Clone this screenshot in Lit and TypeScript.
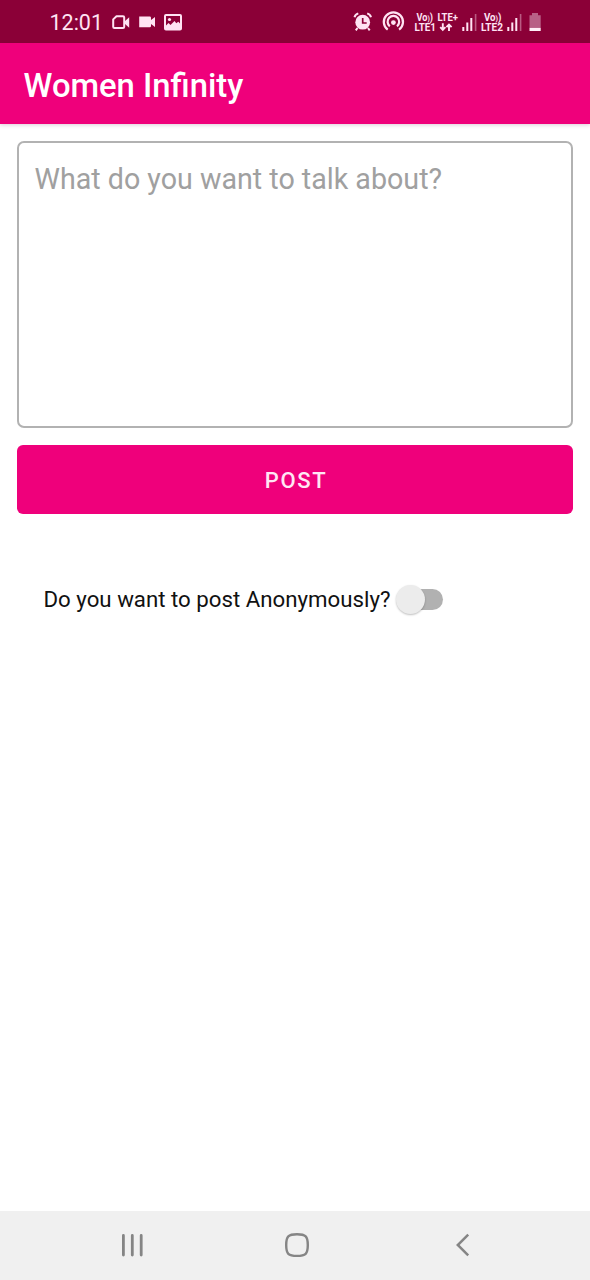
import { LitElement, html, css } from "lit";
import { customElement, state } from "lit/decorators.js";

@customElement("status-bar")
class StatusBar extends LitElement {
  static styles = css`
    :host { display: flex; height: 43px; background: #8b0037; color: #ffe3f3; box-sizing: border-box; padding-left: 49.5px; }
    .time { width: 62.5px; font-size: 21.5px; line-height: 45px; }
    svg { display: block; flex: none; }
    .right { margin-left: 168px; }
    text { font-family: Roboto, sans-serif; font-weight: 700; fill: #ffe3f3; }
  `;
  render() {
    return html`
      <span class="time">12:01</span>
      <svg width="72" height="43" viewBox="112 0 72 43" fill="none" stroke="#ffe3f3" stroke-width="2">
        <path d="M116.5 16.2h6.5q1.2 0 1.2 1.2v9.4q0 1.2-1.2 1.2h-8.6q-1.2 0-1.2-1.2v-7.4z" stroke-linejoin="round"/>
        <path d="M124.5 21.5l4.7-4.3v10.5l-4.7-4.2z" fill="#ffe3f3" stroke="none"/>
        <path d="M139.2 16.5h10.6q1.2 0 1.2 1.2v2.4l4-3v10l-4-3v2q0 1.2-1.2 1.2h-10.6z" fill="#ffe3f3" stroke="none"/>
        <rect x="165" y="15" width="16" height="14.5" rx="1"/>
        <path d="M165 26.5l3.5-3.5 2 2 4-4 1.8 2.2 2-1.5 2.7 2.8v5h-16z" fill="#ffe3f3" stroke="none"/>
        <circle cx="169.5" cy="19.5" r="1.6" fill="#ffe3f3" stroke="none"/>
      </svg>
      <svg class="right" width="190" height="43" viewBox="352 0 190 43" fill="none" stroke="#ffe3f3">
        <circle cx="362.7" cy="22.2" r="7.4" fill="#ffe3f3" stroke="none"/>
        <path d="M354.5 17.2q.6-2.7 3.8-3.8M371 17.2q-.6-2.7-3.8-3.8M357.5 28l-1.7 2.4M368 28l1.7 2.4" stroke-width="2"/>
        <path d="M362.7 18v5h4" stroke="#8b0037" stroke-width="1.7"/>
        <path d="M387.7 29.6a9.6 9.6 0 1 1 11.4 0M389.8 26.3a5.8 5.8 0 1 1 7.2 0" stroke-width="2.2"/>
        <circle cx="393.4" cy="22.6" r="2.4" fill="#ffe3f3" stroke="none"/>
        <g stroke="none" font-size="10.2">
          <text x="416.5" y="20.8" textLength="16.5" lengthAdjust="spacingAndGlyphs">Vo<tspan font-size="7.5">)</tspan>)</text>
          <text x="437.5" y="20.8" textLength="20.5" lengthAdjust="spacingAndGlyphs">LTE+</text>
          <text x="414.5" y="30.9" textLength="21.5" lengthAdjust="spacingAndGlyphs">LTE1</text>
          <text x="484" y="20.8" textLength="17.5" lengthAdjust="spacingAndGlyphs">Vo<tspan font-size="7.5">)</tspan>)</text>
          <text x="481" y="30.9" textLength="22" lengthAdjust="spacingAndGlyphs">LTE2</text>
        </g>
        <path d="M442.8 23.3v6.7M440.2 27.2l2.6 2.6 2.6-2.6M449 31v-6.7M446.4 27.1l2.6-2.6 2.6 2.6" stroke-width="1.9"/>
        <path d="M463.3 27v4M467.3 22.5v8.5M471.3 18v13M508.3 27v4M512.3 22.5v8.5M516.3 18v13" stroke-width="2"/>
        <path d="M475.6 14v17M520.6 14v17" stroke-width="1.6" opacity=".4"/>
        <path d="M529.5 15.2h2.5v-2.2h6v2.2h2.7v12.5h-11.2z" fill="#b86086" stroke="none"/>
        <rect x="529.5" y="27.8" width="11.2" height="3.2" fill="#fff0f8" stroke="none"/>
      </svg>
    `;
  }
}

@customElement("nav-bar")
class NavBar extends LitElement {
  static styles = css`
    :host { display: block; height: 69px; background: #f0f0f0; }
    svg { display: block; }
  `;
  render() {
    return html`
      <svg width="590" height="69" viewBox="0 1211 590 69" fill="none" stroke="#858585">
        <path d="M123.4 1235.5v19.5M132.3 1235.5v19.5M141.2 1235.5v19.5" stroke-width="2.8" stroke-linecap="round"/>
        <path d="M297 1234.3c8.7 0 10.8 2 10.8 10.8s-2.1 10.8-10.8 10.8-10.8-2-10.8-10.8 2.1-10.8 10.8-10.8z" stroke-width="2.4"/>
        <path d="M468.2 1234.7l-10.4 10.3 10.4 10.3" stroke-width="2.5"/>
      </svg>
    `;
  }
}

@customElement("app-root")
class AppRoot extends LitElement {
  @state() private anonymous = false;

  static styles = css`
    :host { display: flex; flex-direction: column; height: 1280px; background: #fff; font-family: Roboto, sans-serif; }
    header { height: 81px; box-sizing: border-box; padding: 3px 23.5px 0; line-height: 81px; background: #ef007b; color: #fff; font-size: 32.8px; font-weight: 500; box-shadow: 0 1px 4px rgba(80, 0, 60, 0.2); white-space: nowrap; }
    main { flex: 1; display: flex; flex-direction: column; padding: 17px 17px 0; }
    .message { height: 287px; box-sizing: border-box; border: 2px solid #b2b2b2; border-radius: 7px; padding: 15px 15.5px; font: 400 28.65px/42px Roboto, sans-serif; resize: none; outline: none; background: #fff; }
    .message::placeholder { color: #a0a0a0; opacity: 1; }
    .post { margin: 17px 0 0; height: 69px; padding: 2px 0 0 2px; border: 0; border-radius: 6px; background: #ef007b; color: #ffe6f4; font: 500 22px Roboto, sans-serif; letter-spacing: 1.6px; }
    .row { display: flex; align-items: center; margin: 69px 0 0 26.5px; height: 32px; font-size: 22.25px; color: #111; white-space: nowrap; }
    .label { width: 352.5px; }
    .switch { display: flex; align-items: center; width: 47px; height: 21px; padding: 0; border: 0; border-radius: 11px; background: linear-gradient(90deg, transparent 14px, #b1b1b1 14px); }
    .thumb { flex: none; width: 29px; height: 29px; border-radius: 50%; background: #ececec; box-shadow: 0 1px 2px rgba(0, 0, 0, 0.25); }
    .on .thumb { margin-left: auto; background: #ef007b; }
  `;
  render() {
    return html`
      <status-bar></status-bar>
      <header>Women Infinity</header>
      <main>
        <textarea class="message" placeholder="What do you want to talk about?"></textarea>
        <button class="post">POST</button>
        <div class="row">
          <span class="label">Do you want to post Anonymously?</span>
          <button class="switch ${this.anonymous ? "on" : ""}" role="switch" aria-label="Post anonymously"
            aria-checked=${this.anonymous ? "true" : "false"} @click=${() => (this.anonymous = !this.anonymous)}>
            <span class="thumb"></span>
          </button>
        </div>
      </main>
      <nav-bar></nav-bar>
    `;
  }
}
